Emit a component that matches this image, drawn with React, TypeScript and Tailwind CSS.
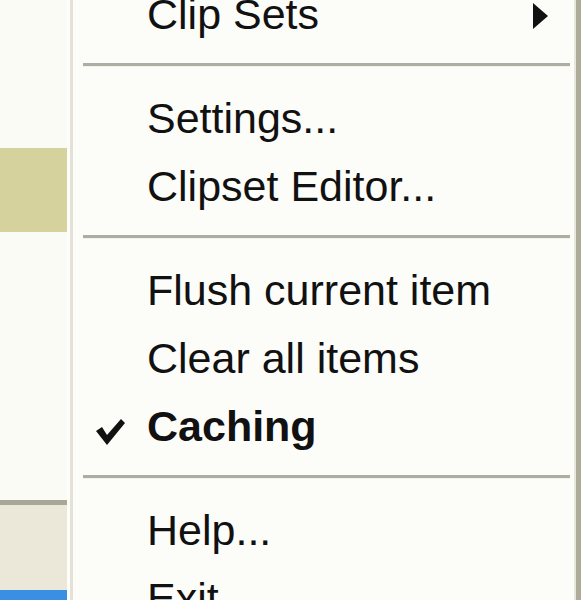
import { ReactNode } from "react"

const font = { fontFamily: '"Liberation Sans", Arial, sans-serif' }

const Item = ({
  children,
  bold,
  checked,
  submenu,
}: {
  children: ReactNode
  bold?: boolean
  checked?: boolean
  submenu?: boolean
}) => (
  <div className="flex h-[68px] shrink-0 items-start">
    <div className="relative h-full w-[73px] shrink-0">
      {checked && (
        <svg
          className="absolute left-[21px] top-[24px]"
          width="31"
          height="28"
          viewBox="0 0 31 28"
        >
          <path d="M1 13 L7 9 L12 17 L26 1 L30 5 L12 27 Z" fill="#111" />
        </svg>
      )}
    </div>
    <span
      className={`text-[43px] leading-[64px] text-[#111] whitespace-nowrap ${
        bold ? "font-bold" : "font-normal"
      }`}
    >
      {children}
    </span>
    {submenu && (
      <svg
        className="ml-auto mr-[26px] mt-[21px]"
        width="16"
        height="26"
        viewBox="0 0 16 26"
      >
        <path d="M1 0 L16 13 L1 26 Z" fill="#111" />
      </svg>
    )}
  </div>
)

const Separator = () => (
  <div className="h-[36px] shrink-0 pt-[13px] pl-[9px] pr-[4px]">
    <div className="h-[3px] bg-[#aeada4]" />
    <div className="h-[1px] bg-[#f2f1ea]" />
  </div>
)

export default function App() {
  return (
    <div className="flex h-[600px] w-[581px] overflow-hidden bg-[#fbfbf6]" style={font}>
      <div className="flex w-[67px] shrink-0 flex-col">
        <div className="h-[148px] bg-[#fbfbf5]" />
        <div className="h-[84px] bg-[#d5d29d]" />
        <div className="h-[268px] bg-[#fbfbf5]" />
        <div className="h-[5px] bg-[#a9a797]" />
        <div className="h-[85px] bg-[#ebe8da]" />
        <div className="flex-1 bg-[#3a8fe3]" />
      </div>
      <div className="w-[3px] shrink-0 bg-[#fdfdf9]" />
      <div className="w-[3px] shrink-0 bg-[#e4e2d8]" />
      <div className="w-[1px] shrink-0 bg-[#fdfdf9]" />
      <div className="flex flex-1 flex-col -mt-[18px] bg-[#fcfcf9]">
        <Item submenu>Clip Sets</Item>
        <Separator />
        <Item>Settings...</Item>
        <Item>Clipset Editor...</Item>
        <Separator />
        <Item>Flush current item</Item>
        <Item>Clear all items</Item>
        <Item bold checked>
          Caching
        </Item>
        <Separator />
        <Item>Help...</Item>
        <Item>Exit</Item>
      </div>
      <div className="w-[2px] shrink-0 bg-[#e9e7dd]" />
      <div className="w-[5px] shrink-0 bg-[#aeab9a]" />
    </div>
  )
}
